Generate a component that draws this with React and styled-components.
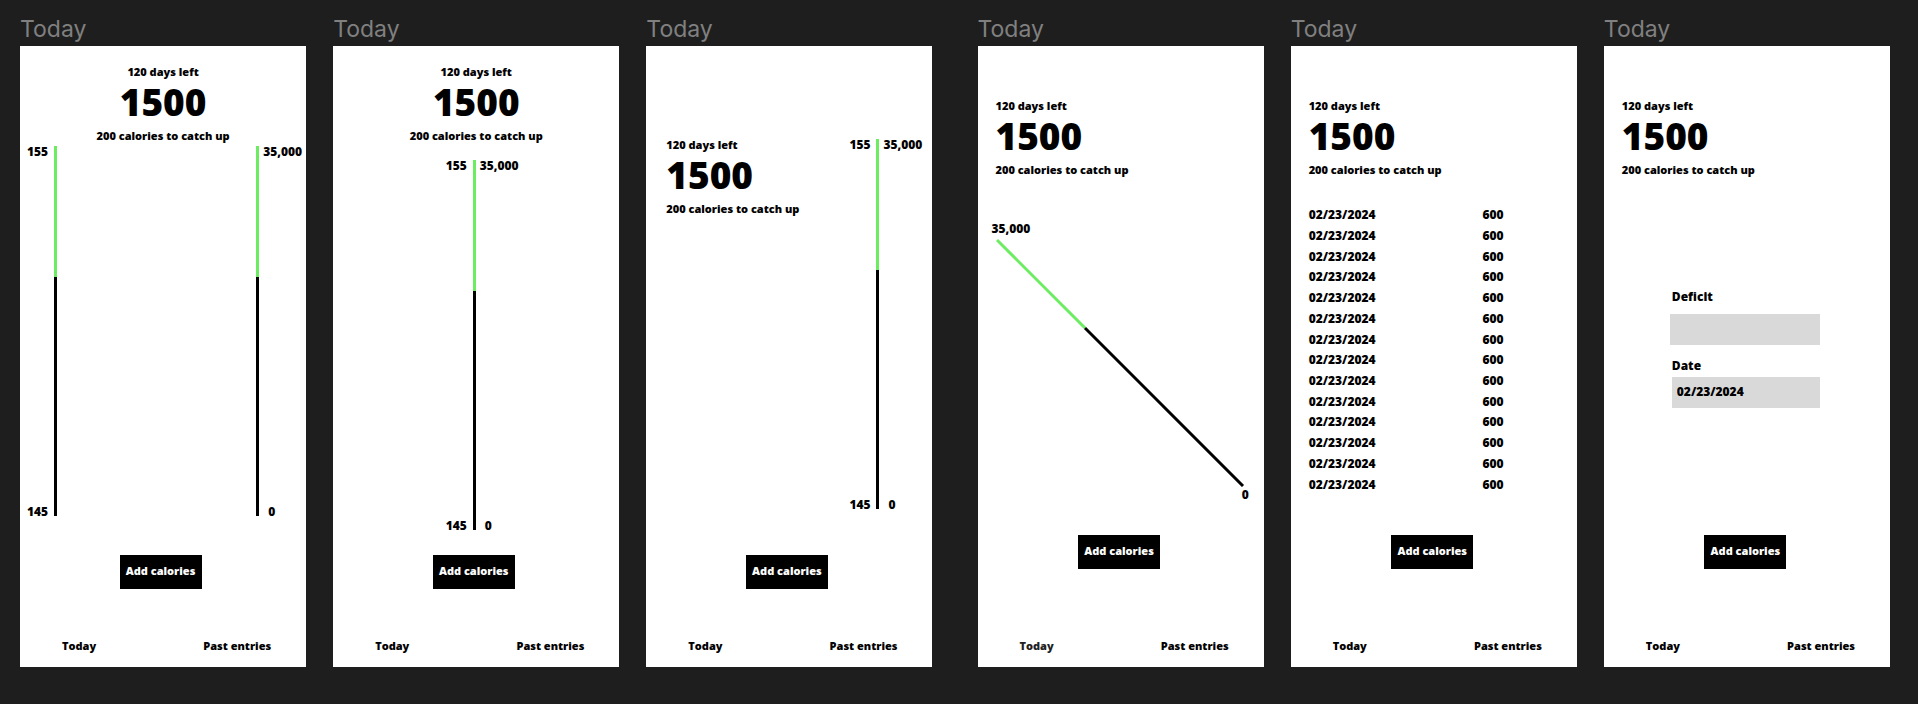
import React from "react";
import styled, { createGlobalStyle } from "styled-components";

const GlobalStyle = createGlobalStyle`
  * { box-sizing: border-box; }
  body { margin: 0; background: #1e1e1e; }
`;

const GREEN = "#6cec61";

const Board = styled.main`
  display: flex;
  gap: 45px;
  padding: 12px 28px 37px 20px;
  background: #1e1e1e;
  font-family: "Open Sans", "Noto Sans", sans-serif;
  font-size: 11px;
  line-height: 16px;
  font-weight: 800;
  color: #000;
`;

const FrameGroup = styled.section`
  flex: 1;
  display: grid;
  grid-template-columns: repeat(3, minmax(0, 1fr));
  gap: 27px;
`;

const Frame = styled.article`
  display: flex;
  flex-direction: column;
`;

const FrameTitle = styled.h2`
  margin: 0;
  height: 34px;
  font: 400 23px/35px Inter, sans-serif;
  color: #808080;
`;

const Screen = styled.div`
  flex: 1;
  display: flex;
  flex-direction: column;
  min-height: 621px;
  padding: ${(p) => p.$top}px 0 13px;
  background: #fff;
`;

const SummaryBox = styled.header`
  padding-left: ${(p) => (p.$centered ? 0 : p.$inset || 18)}px;
  text-align: ${(p) => (p.$centered ? "center" : "left")};
  white-space: nowrap;
`;

const Line = styled.p`
  margin: 0;
`;

const Total = styled.p`
  margin: 0 0 4px;
  font-size: 37px;
  line-height: 44px;
`;

const Gauges = styled.div`
  display: flex;
  justify-content: space-between;
  margin-top: ${(p) => p.$gap || 0}px;
  padding-right: ${(p) => p.$right || 0}px;
`;

const GaugeBox = styled.div`
  flex: ${(p) => (p.$fill ? 1 : "none")};
  display: grid;
  grid-template-columns: ${(p) => p.$columns};
  height: 370px;
`;

const Ends = styled.div`
  display: flex;
  flex-direction: column;
  justify-content: space-between;
  margin-bottom: -2px;
  font-size: 12px;
  line-height: 12px;
  text-align: ${(p) => p.$align};
  padding: ${(p) => (p.$align === "right" ? "0 6px 0 0" : "0 0 0 4px")};
`;

const Zero = styled.span`
  padding-left: 5px;
`;

const Track = styled.div`
  background: linear-gradient(${GREEN} 0 131px, #000 131px);
`;

const SplitRow = styled.div`
  display: flex;
  justify-content: space-between;
`;

const Slope = styled.div`
  display: flex;
  flex-direction: column;
  margin-top: 43px;
  padding: 0 15px 0 14px;
  font-size: 12px;
`;

const SlopeLine = styled.svg`
  display: block;
  width: 250px;
  height: 250px;
  margin-left: 4px;
`;

const SlopeEnd = styled.span`
  align-self: flex-end;
`;

const Entries = styled.table`
  width: 100%;
  height: 290px;
  margin-top: 27px;
  border-collapse: collapse;
  table-layout: fixed;
  font-size: 12px;
  td { padding: 0; }
  td:first-child { width: 67%; padding-left: 18px; }
`;

const Form = styled.form`
  display: flex;
  flex-direction: column;
  gap: 13px;
  width: 150px;
  margin: 111px 0 0 66px;
`;

const Field = styled.div`
  display: flex;
  flex-direction: column;
  gap: ${(p) => p.$gap}px;
  padding-left: ${(p) => p.$inset}px;
`;

const Label = styled.label`
  padding-left: ${(p) => p.$inset}px;
  font-size: 12px;
`;

const Input = styled.input`
  width: 100%;
  height: 31px;
  padding: 0 5px 2px;
  border: 0;
  border-radius: 0;
  background: #d9d9d9;
  font: inherit;
  font-size: 12px;
  color: inherit;
`;

const AddButton = styled.button`
  align-self: center;
  width: 82px;
  height: 34px;
  margin: auto ${(p) => (p.$raised ? "3px 69px" : "5px 49px")} 0;
  padding: 0 0 3px;
  border: 0;
  background: #000;
  color: #fff;
  font: inherit;
  white-space: nowrap;
`;

const Nav = styled.nav`
  display: flex;
  justify-content: space-between;
  padding: 0 35px 0 42px;
`;

const NavLink = styled.a`
  color: ${(p) => (p.$muted ? "#222" : "#000")};
  text-decoration: none;
`;

function Summary(props) {
  return (
    <SummaryBox {...props}>
      <Line>120 days left</Line>
      <Total>1500</Total>
      <Line>200 calories to catch up</Line>
    </SummaryBox>
  );
}

function Gauge({ columns, weight, calories, fill }) {
  return (
    <GaugeBox $columns={columns} $fill={fill}>
      {weight && (
        <Ends $align="right">
          <span>155</span>
          <span>145</span>
        </Ends>
      )}
      <Track />
      {calories && (
        <Ends $align="left">
          <span>35,000</span>
          <Zero>0</Zero>
        </Ends>
      )}
    </GaugeBox>
  );
}

function Phone({ top, raised, muted, children }) {
  return (
    <Frame>
      <FrameTitle>Today</FrameTitle>
      <Screen $top={top}>
        {children}
        <AddButton type="button" $raised={raised}>Add calories</AddButton>
        <Nav>
          <NavLink href="#today" $muted={muted}>Today</NavLink>
          <NavLink href="#past">Past entries</NavLink>
        </Nav>
      </Screen>
    </Frame>
  );
}

const entries = Array.from({ length: 14 }, () => ({ date: "02/23/2024", amount: 600 }));

export default function App() {
  return (
    <>
      <GlobalStyle />
      <Board>
        <FrameGroup>
          <Phone top={18}>
            <Summary $centered />
            <Gauges $gap={2}>
              <Gauge columns="34px 3px" weight />
              <Gauge columns="3px 47px" calories />
            </Gauges>
          </Phone>
          <Phone top={18}>
            <Summary $centered />
            <Gauges $gap={16} $right={4}>
              <Gauge columns="1fr 3px 1fr" weight calories fill />
            </Gauges>
          </Phone>
          <Phone top={91}>
            <SplitRow>
              <Summary $inset={20} />
              <Gauges $gap={2}>
                <Gauge columns="28px 3px 53px" weight calories />
              </Gauges>
            </SplitRow>
          </Phone>
        </FrameGroup>
        <FrameGroup>
          <Phone top={52} raised muted>
            <Summary />
            <Slope>
              <span>35,000</span>
              <SlopeLine viewBox="0 0 250 250" fill="none" strokeWidth="3" aria-hidden="true">
                <path d="M1 3 L89 91" stroke={GREEN} />
                <path d="M89 91 L247 249" stroke="#000" />
              </SlopeLine>
              <SlopeEnd>0</SlopeEnd>
            </Slope>
          </Phone>
          <Phone top={52} raised>
            <Summary />
            <Entries>
              <tbody>
                {entries.map((entry, i) => (
                  <tr key={i}>
                    <td>{entry.date}</td>
                    <td>{entry.amount}</td>
                  </tr>
                ))}
              </tbody>
            </Entries>
          </Phone>
          <Phone top={52} raised>
            <Summary />
            <Form>
              <Field $gap={9} $inset={0}>
                <Label htmlFor="deficit" $inset={2}>Deficit</Label>
                <Input id="deficit" type="text" />
              </Field>
              <Field $gap={3} $inset={2}>
                <Label htmlFor="date" $inset={0}>Date</Label>
                <Input id="date" type="text" defaultValue="02/23/2024" />
              </Field>
            </Form>
          </Phone>
        </FrameGroup>
      </Board>
    </>
  );
}
